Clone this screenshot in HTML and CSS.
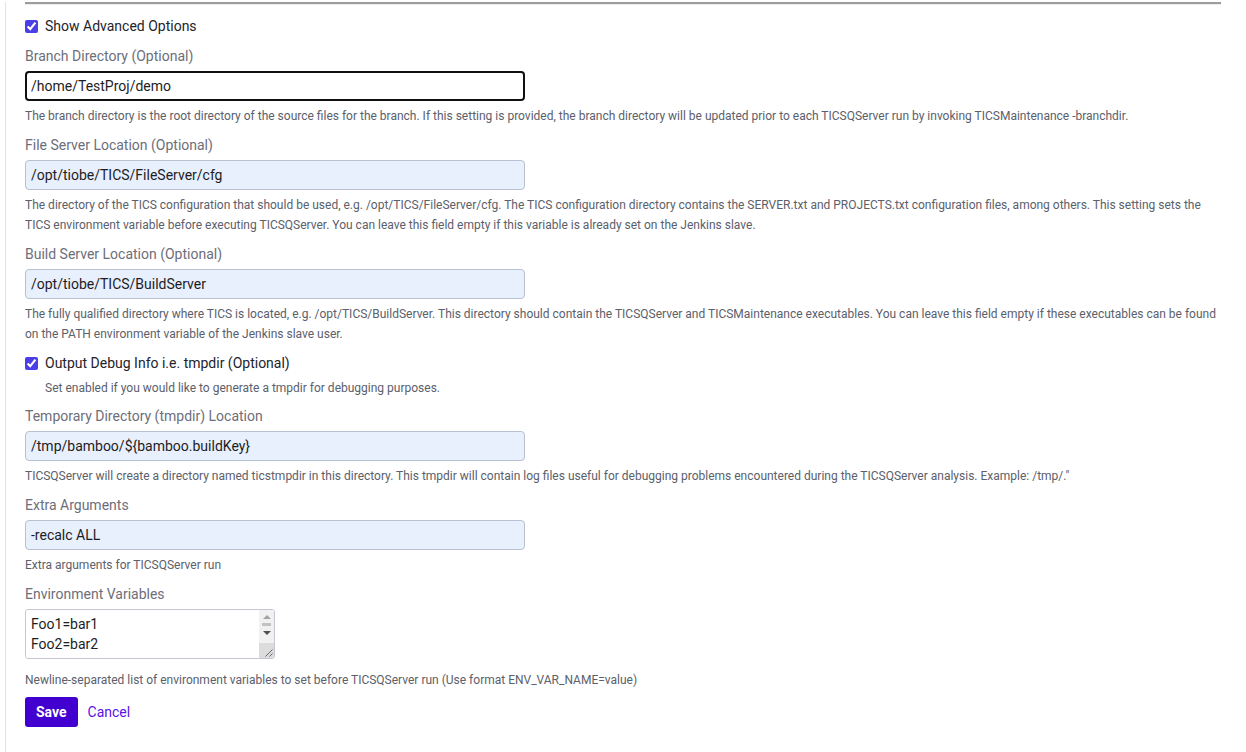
FILE: index.html
```html
<!DOCTYPE html>
<html>
<head>
    <title>TICS Advanced Options</title>
    <link rel="stylesheet" href="styles.css">
</head>
<body>
    <div class="page">
        <hr class="divider">
        <form class="settings">
            <label class="check-row">
                <input type="checkbox" checked>
                <span>Show Advanced Options</span>
            </label>

            <div class="field">
                <div class="label">Branch Directory (Optional)</div>
                <input class="text-input focused" type="text" value="/home/TestProj/demo">
                <div class="help">The branch directory is the root directory of the source files for the branch. If this setting is provided, the branch directory will be updated prior to each TICSQServer run by invoking TICSMaintenance -branchdir.</div>
            </div>

            <div class="field">
                <div class="label">File Server Location (Optional)</div>
                <input class="text-input filled" type="text" value="/opt/tiobe/TICS/FileServer/cfg">
                <div class="help">The directory of the TICS configuration that should be used, e.g. /opt/TICS/FileServer/cfg. The TICS configuration directory contains the SERVER.txt and PROJECTS.txt configuration files, among others. This setting sets the TICS environment variable before executing TICSQServer. You can leave this field empty if this variable is already set on the Jenkins slave.</div>
            </div>

            <div class="field">
                <div class="label">Build Server Location (Optional)</div>
                <input class="text-input filled" type="text" value="/opt/tiobe/TICS/BuildServer">
                <div class="help">The fully qualified directory where TICS is located, e.g. /opt/TICS/BuildServer. This directory should contain the TICSQServer and TICSMaintenance executables. You can leave this field empty if these executables can be found on the PATH environment variable of the Jenkins slave user.</div>
            </div>

            <div class="field">
                <label class="check-row">
                    <input type="checkbox" checked>
                    <span>Output Debug Info i.e. tmpdir (Optional)</span>
                </label>
                <div class="help indent">Set enabled if you would like to generate a tmpdir for debugging purposes.</div>
            </div>

            <div class="field tight">
                <div class="label">Temporary Directory (tmpdir) Location</div>
                <input class="text-input filled" type="text" value="/tmp/bamboo/${bamboo.buildKey}">
                <div class="help">TICSQServer will create a directory named ticstmpdir in this directory. This tmpdir will contain log files useful for debugging problems encountered during the TICSQServer analysis. Example: /tmp/."</div>
            </div>

            <div class="field">
                <div class="label">Extra Arguments</div>
                <input class="text-input filled" type="text" value="-recalc ALL">
                <div class="help">Extra arguments for TICSQServer run</div>
            </div>

            <div class="field">
                <div class="label">Environment Variables</div>
                <div class="text-box">
                    <textarea class="text-area" rows="2">Foo1=bar1
Foo2=bar2
Foo3=bar3</textarea>
                    <div class="scrollbar">
                        <div class="sb-btn"><span class="arrow up"></span></div>
                        <div class="sb-thumb"></div>
                        <div class="sb-btn"><span class="arrow down"></span></div>
                        <div class="sb-corner">
                            <svg width="15" height="15" viewBox="0 0 15 15">
                                <path d="M13.5 6.5 L6.5 13.5 M13.5 10.5 L10.5 13.5" stroke="#6a6a6a" stroke-width="1" fill="none"/>
                            </svg>
                        </div>
                    </div>
                </div>
                <div class="help spaced">Newline-separated list of environment variables to set before TICSQServer run (Use format ENV_VAR_NAME=value)</div>
            </div>

            <div class="actions">
                <button type="button" class="save">Save</button>
                <a href="#" class="cancel">Cancel</a>
            </div>
        </form>
    </div>
</body>
</html>
```

FILE: styles.css
```css
body {
    margin: 0;
    font-family: Roboto, "Liberation Sans", sans-serif;
    background: #fff;
    color: #222;
}
.page {
    margin-left: 5px;
    border-left: 1px solid #e2e2e2;
    min-height: 752px;
    padding: 0 25px 0 19px;
}
.divider {
    margin: 2px 0 0 0;
    border: 0;
    border-top: 2px solid #9d9d9d;
    border-bottom: 1px solid #ececec;
    width: 1196px;
}
.settings {
    padding-top: 11px;
}
.check-row {
    display: flex;
    align-items: center;
    height: 20px;
    font-size: 14px;
    color: #23232b;
    cursor: pointer;
}
.check-row input {
    margin: 0 7px 0 0;
    width: 13px;
    height: 13px;
    accent-color: #4a3fe6;
}
.field {
    margin-top: 9px;
}
.settings > .field:first-of-type {
    margin-top: 10px;
}
.field.tight {
    margin-top: 8px;
}
.label {
    font-size: 14px;
    line-height: 20px;
    color: #6d6e7a;
}
.text-input {
    display: block;
    box-sizing: border-box;
    width: 500px;
    height: 30px;
    margin-top: 5px;
    padding: 0 5px;
    font-family: Roboto, "Liberation Sans", sans-serif;
    font-size: 14px;
    color: #1d1d24;
    border-radius: 4px;
    outline: none;
}
.text-input.focused {
    border: 2px solid #111;
    background: #fff;
    padding: 0 4px;
}
.text-input.filled {
    border: 1px solid #b9c0cf;
    background: #e8f0fe;
}
.text-box {
    display: flex;
    box-sizing: border-box;
    width: 250px;
    height: 50px;
    margin-top: 5px;
    border: 1px solid #c4c8d2;
    border-radius: 3px;
    overflow: hidden;
}
.text-area {
    flex: 1;
    min-width: 0;
    margin: 0;
    padding: 4px 5px;
    border: 0;
    font-family: Roboto, "Liberation Sans", sans-serif;
    font-size: 14px;
    line-height: 20px;
    color: #1d1d24;
    resize: none;
    overflow: hidden;
    outline: none;
}
.scrollbar {
    display: flex;
    flex-direction: column;
    width: 15px;
    background: #f1f1f1;
}
.sb-btn {
    display: flex;
    align-items: center;
    justify-content: center;
    height: 13px;
}
.arrow {
    width: 0;
    height: 0;
    border-left: 4px solid transparent;
    border-right: 4px solid transparent;
}
.arrow.up {
    border-bottom: 4px solid #a3a3a3;
}
.arrow.down {
    border-top: 4px solid #505050;
}
.sb-thumb {
    height: 3px;
    margin: 0 3px;
    background: #c1c1c1;
}
.sb-corner {
    margin-top: auto;
    height: 15px;
    background: #dcdcdc;
}
.sb-corner svg {
    display: block;
}
.help {
    margin-top: 5px;
    font-size: 12px;
    line-height: 20px;
    color: #5b606b;
}
.help.indent {
    padding-left: 20px;
}
.help.spaced {
    margin-top: 11px;
}
.actions {
    display: flex;
    align-items: center;
    gap: 10px;
    margin-top: 7px;
}
.save {
    height: 30px;
    padding: 0 11px;
    border: 0;
    border-radius: 3px;
    background: #4200d0;
    color: #fff;
    font-family: Roboto, "Liberation Sans", sans-serif;
    font-size: 14px;
    font-weight: bold;
    cursor: pointer;
}
.cancel {
    font-size: 14px;
    color: #5a12e6;
    text-decoration: none;
}
```
